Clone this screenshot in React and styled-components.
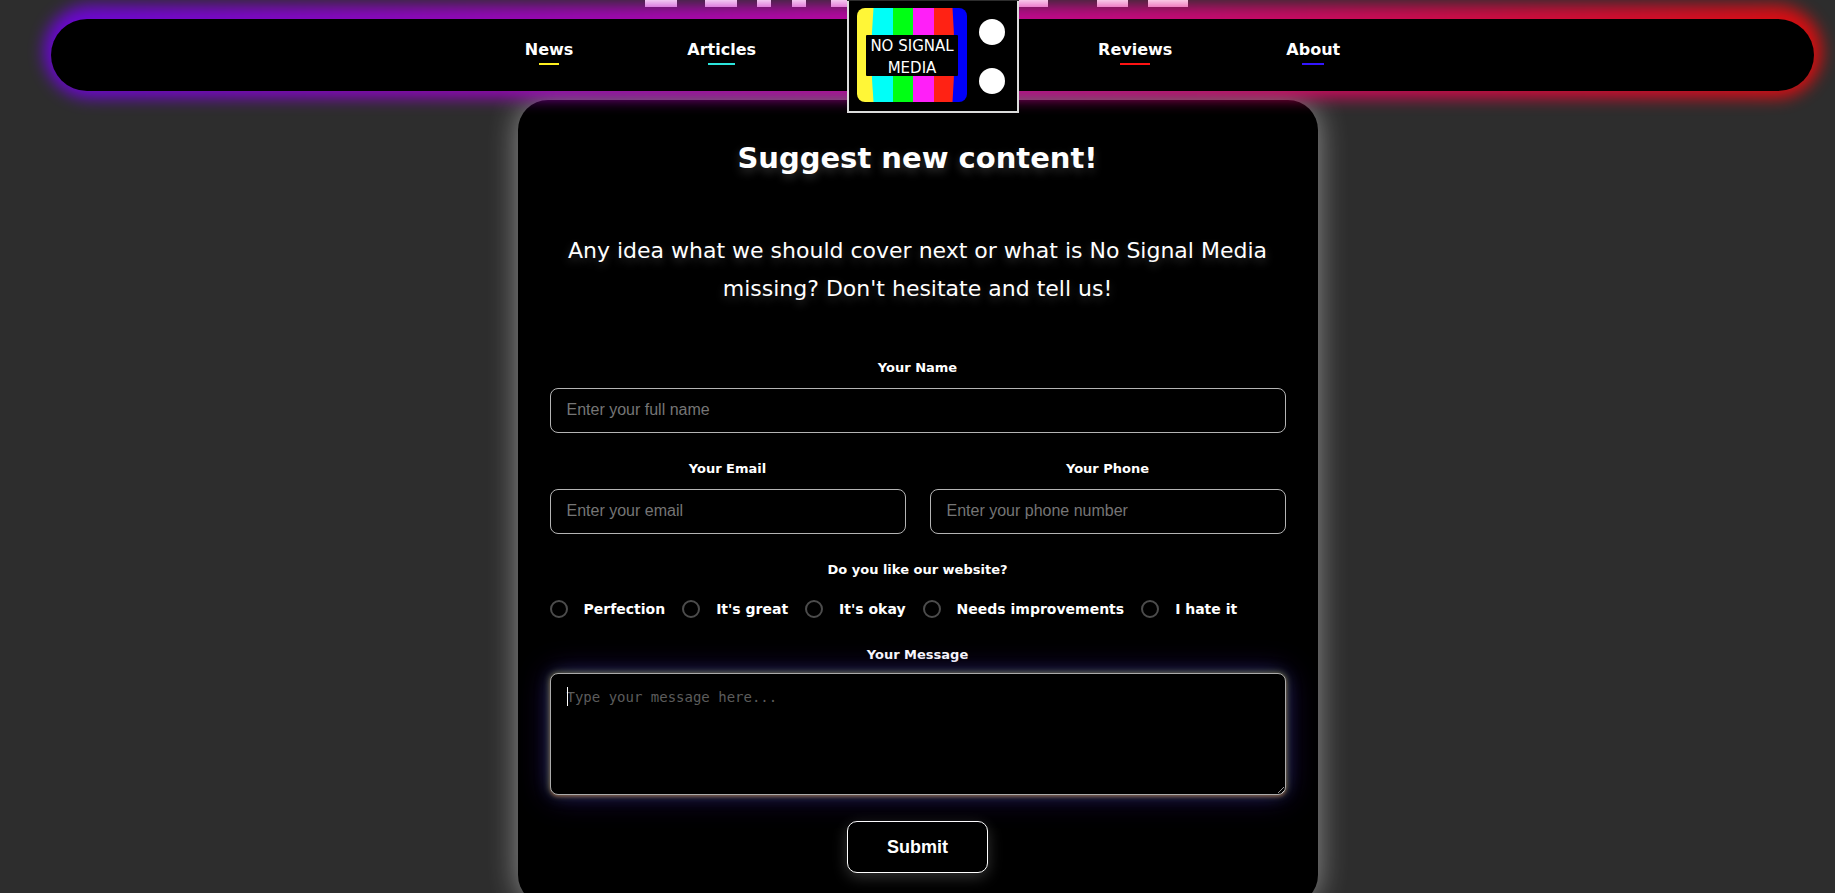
import React from "react";
import styled, { createGlobalStyle } from "styled-components";

const display = `"DejaVu Sans", Verdana, sans-serif`;
const ui = `"Liberation Sans", Arial, sans-serif`;

const GlobalStyle = createGlobalStyle`
  *, *::before, *::after { box-sizing: border-box; }
  html { background: #2d2d2d; scrollbar-width: none; }
  body { margin: 0; background: #2d2d2d; color: #fff; font-family: ${display}; }
`;

const Page = styled.div`
  min-height: 100vh;
  display: flex;
  flex-direction: column;
`;

const Marquee = styled.svg`
  display: block;
  width: 545px;
  height: 7px;
  margin: 0 auto;
`;

const Nav = styled.nav`
  position: relative;
  z-index: 2;
  display: flex;
  justify-content: center;
  align-items: center;
  height: 72px;
  margin: 12px 21px 9px 51px;

  &::before,
  &::after {
    content: "";
    position: absolute;
    border-radius: 50px;
  }
  &::before {
    inset: -14px -8px -7px -7px;
    z-index: -2;
    background: linear-gradient(90deg, #7400f0, #d800b0 50%, #f80808);
    filter: blur(8px);
    opacity: 0.85;
  }
  &::after {
    inset: 0;
    z-index: -1;
    background: #000;
  }
`;

const NavLink = styled.a`
  display: flex;
  flex-direction: column;
  align-items: center;
  gap: 1px;
  padding: 0 57px 7px;
  color: #fff;
  font-size: 16px;
  font-weight: 700;
  line-height: 24px;
  text-decoration: none;

  &::after {
    content: "";
    width: 40%;
    height: 2px;
    background: ${(p) => p.$accent};
  }
`;

const LogoLink = styled.a`
  display: block;
  flex: none;
  width: 172px;
  height: 113px;
  margin: -19px 22px -22px 34px;

  svg { display: block; }
`;

const Card = styled.main`
  width: 100%;
  max-width: 800px;
  margin: 0 auto;
  padding: 38px 32px 32px;
  border-radius: 30px;
  background: #000;
  box-shadow: 0 0 30px rgba(255, 255, 255, 0.48);
  text-align: center;
`;

const Title = styled.h1`
  margin: 0 0 54px;
  font-size: 29px;
  line-height: 40px;
  font-weight: 700;
  text-shadow: 0 4px 10px rgba(255, 255, 255, 0.2);
`;

const Intro = styled.p`
  margin: 0 0 50px;
  font-size: 22px;
  line-height: 38px;
  text-shadow: 0 4px 10px rgba(255, 255, 255, 0.2);
`;

const Form = styled.form`
  display: flex;
  flex-direction: column;
  gap: 26px;
`;

const FieldRow = styled.div`
  display: grid;
  grid-template-columns: 1fr 1fr;
  gap: 24px;
`;

const Field = styled.div`
  display: flex;
  flex-direction: column;
  gap: ${(p) => (p.$compact ? 8 : 10)}px;
`;

const Label = styled.label`
  font-size: 13px;
  line-height: 20px;
  font-weight: 700;
`;

const Input = styled.input`
  width: 100%;
  height: 45px;
  padding: 0 16px 2px;
  border: 1px solid #b4b4b4;
  border-radius: 8px;
  outline: none;
  background: #000;
  color: #fff;
  font-family: ${ui};
  font-size: 16px;

  &::placeholder { color: #757575; opacity: 1; }
`;

const MessageBox = styled.div`
  position: relative;
  display: flex;
`;

const TextArea = styled.textarea`
  width: 100%;
  height: 122px;
  padding: 13px 16px;
  border: 1px solid #aaa;
  border-radius: 8px;
  outline: none;
  resize: vertical;
  background: #000;
  color: #fff;
  font-family: "DejaVu Sans Mono", Consolas, monospace;
  font-size: 14px;
  line-height: 20px;
  box-shadow:
    0 0 6px rgba(230, 230, 120, 0.5),
    0 2px 3px rgba(200, 80, 70, 0.3),
    0 0 15px rgba(60, 130, 150, 0.35),
    0 0 30px rgba(80, 30, 200, 0.45);

  &::placeholder { color: #5c5c5c; opacity: 1; }
`;

const Caret = styled.span`
  position: absolute;
  top: 14px;
  left: 17px;
  width: 1px;
  height: 19px;
  background: #fff;
`;

const RatingGroup = styled.fieldset`
  min-width: 0;
  margin: 0;
  padding: 0;
  border: 0;
`;

const Legend = styled.legend`
  width: 100%;
  padding: 0;
  margin-bottom: 19px;
  font-size: 13px;
  line-height: 20px;
  font-weight: 700;
`;

const Options = styled.div`
  display: flex;
  flex-wrap: wrap;
  gap: 17px;
`;

const Option = styled.label`
  display: flex;
  align-items: center;
  gap: 16px;
  font-size: 14px;
  line-height: 20px;
  font-weight: 700;
  white-space: nowrap;
`;

const Radio = styled.input`
  appearance: none;
  flex: none;
  width: 18px;
  height: 18px;
  margin: 0;
  border: 2px solid #4c4c4c;
  border-radius: 50%;

  &:checked { background: #fff; }
`;

const Submit = styled.button`
  align-self: center;
  height: 52px;
  padding: 0 39px;
  border: 1px solid #fff;
  border-radius: 10px;
  background: #000;
  color: #fff;
  font-family: ${ui};
  font-size: 18px;
  font-weight: 700;
  box-shadow: 0 4px 15px rgba(255, 255, 255, 0.2);
`;

const ratings = ["Perfection", "It's great", "It's okay", "Needs improvements", "I hate it"];

function Logo() {
  return (
    <svg width="172" height="113" viewBox="0 0 172 113">
      <defs>
        <clipPath id="screen">
          <rect x="10" y="8" width="110" height="94" rx="8" />
        </clipPath>
      </defs>
      <rect width="172" height="113" fill="#dcdcdc" />
      <rect x="2" y="1" width="168" height="110" fill="#000" />
      <rect width="172" height="1" fill="#2d2d2d" />
      <g clipPath="url(#screen)">
        <rect x="10" y="8" width="30" height="94" fill="#fff637" />
        <path d="M26.5 8Q22.5 55 26.5 102H46V8Z" fill="#00fff8" />
        <rect x="46" y="8" width="20" height="94" fill="#00ff14" />
        <rect x="66" y="8" width="21" height="94" fill="#ff1ff8" />
        <rect x="87" y="8" width="24" height="94" fill="#ff2214" />
        <path d="M105.5 8Q109 55 105.5 102H121V8Z" fill="#0000fa" />
      </g>
      <rect x="19" y="35" width="92" height="41" rx="1" fill="#000" />
      <g fill="#fff" fontFamily={display} fontSize="15" textAnchor="middle">
        <text x="65" y="51">NO SIGNAL</text>
        <text x="65" y="73">MEDIA</text>
      </g>
      <circle cx="145" cy="32" r="13" fill="#fff" />
      <circle cx="145" cy="81" r="13" fill="#fff" />
    </svg>
  );
}

export default function App() {
  return (
    <>
      <GlobalStyle />
      <Page>
        <Marquee viewBox="0 0 545 7" aria-hidden="true">
          <path
            fill="#fff"
            d="M0 0h32v7H0zM60 0h32v7H60zM112 0h14v7h-14zM147 0h14v7h-14zM186 0h32v7h-32zM371 0h32v7h-32zM452 0h31v7h-31zM503 0h40v7h-40z"
          />
        </Marquee>
        <Nav>
          <NavLink href="#news" $accent="#fff01f">News</NavLink>
          <NavLink href="#articles" $accent="#2ce5dc">Articles</NavLink>
          <LogoLink href="#home" aria-label="Home">
            <Logo />
          </LogoLink>
          <NavLink href="#reviews" $accent="#ff1313">Reviews</NavLink>
          <NavLink href="#about" $accent="#3316ff">About</NavLink>
        </Nav>
        <Card>
          <Title>Suggest new content!</Title>
          <Intro>
            Any idea what we should cover next or what is No Signal Media missing? Don't hesitate
            and tell us!
          </Intro>
          <Form>
            <Field>
              <Label htmlFor="name">Your Name</Label>
              <Input id="name" type="text" placeholder="Enter your full name" />
            </Field>
            <FieldRow>
              <Field>
                <Label htmlFor="email">Your Email</Label>
                <Input id="email" type="email" placeholder="Enter your email" />
              </Field>
              <Field>
                <Label htmlFor="phone">Your Phone</Label>
                <Input id="phone" type="tel" placeholder="Enter your phone number" />
              </Field>
            </FieldRow>
            <RatingGroup>
              <Legend>Do you like our website?</Legend>
              <Options>
                {ratings.map((rating) => (
                  <Option key={rating}>
                    <Radio type="radio" name="rating" value={rating} />
                    {rating}
                  </Option>
                ))}
              </Options>
            </RatingGroup>
            <Field $compact>
              <Label htmlFor="message">Your Message</Label>
              <MessageBox>
                <TextArea id="message" placeholder="Type your message here..." />
                <Caret />
              </MessageBox>
            </Field>
            <Submit type="submit">Submit</Submit>
          </Form>
        </Card>
      </Page>
    </>
  );
}
